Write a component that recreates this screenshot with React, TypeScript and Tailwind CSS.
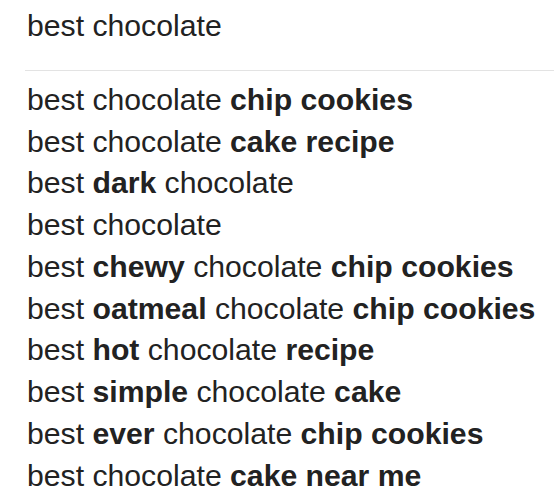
const rows: [string, boolean][][] = [
  [["best chocolate ", false], ["chip cookies", true]],
  [["best chocolate ", false], ["cake recipe", true]],
  [["best ", false], ["dark", true], [" chocolate", false]],
  [["best chocolate", false]],
  [["best ", false], ["chewy", true], [" chocolate ", false], ["chip cookies", true]],
  [["best ", false], ["oatmeal", true], [" chocolate ", false], ["chip cookies", true]],
  [["best ", false], ["hot", true], [" chocolate ", false], ["recipe", true]],
  [["best ", false], ["simple", true], [" chocolate ", false], ["cake", true]],
  [["best ", false], ["ever", true], [" chocolate ", false], ["chip cookies", true]],
  [["best chocolate ", false], ["cake near me", true]],
];

export default function App() {
  return (
    <div
      className="w-[554px] h-[501px] bg-white overflow-hidden text-[#222] text-[30.2px] leading-[41.75px]"
      style={{ fontFamily: '"Liberation Sans", Arial, sans-serif' }}
    >
      <div className="pt-[5px] pl-[27px] whitespace-pre">best chocolate</div>
      <div className="mt-[23px] ml-[25px] h-px bg-[#e3e3e3]" />
      <ul className="pt-[8px] pl-[27px]">
        {rows.map((parts, i) => (
          <li key={i} className="whitespace-pre">
            {parts.map(([t, b], j) => (
              <span key={j} className={b ? "font-bold" : ""}>
                {t}
              </span>
            ))}
          </li>
        ))}
      </ul>
    </div>
  );
}
